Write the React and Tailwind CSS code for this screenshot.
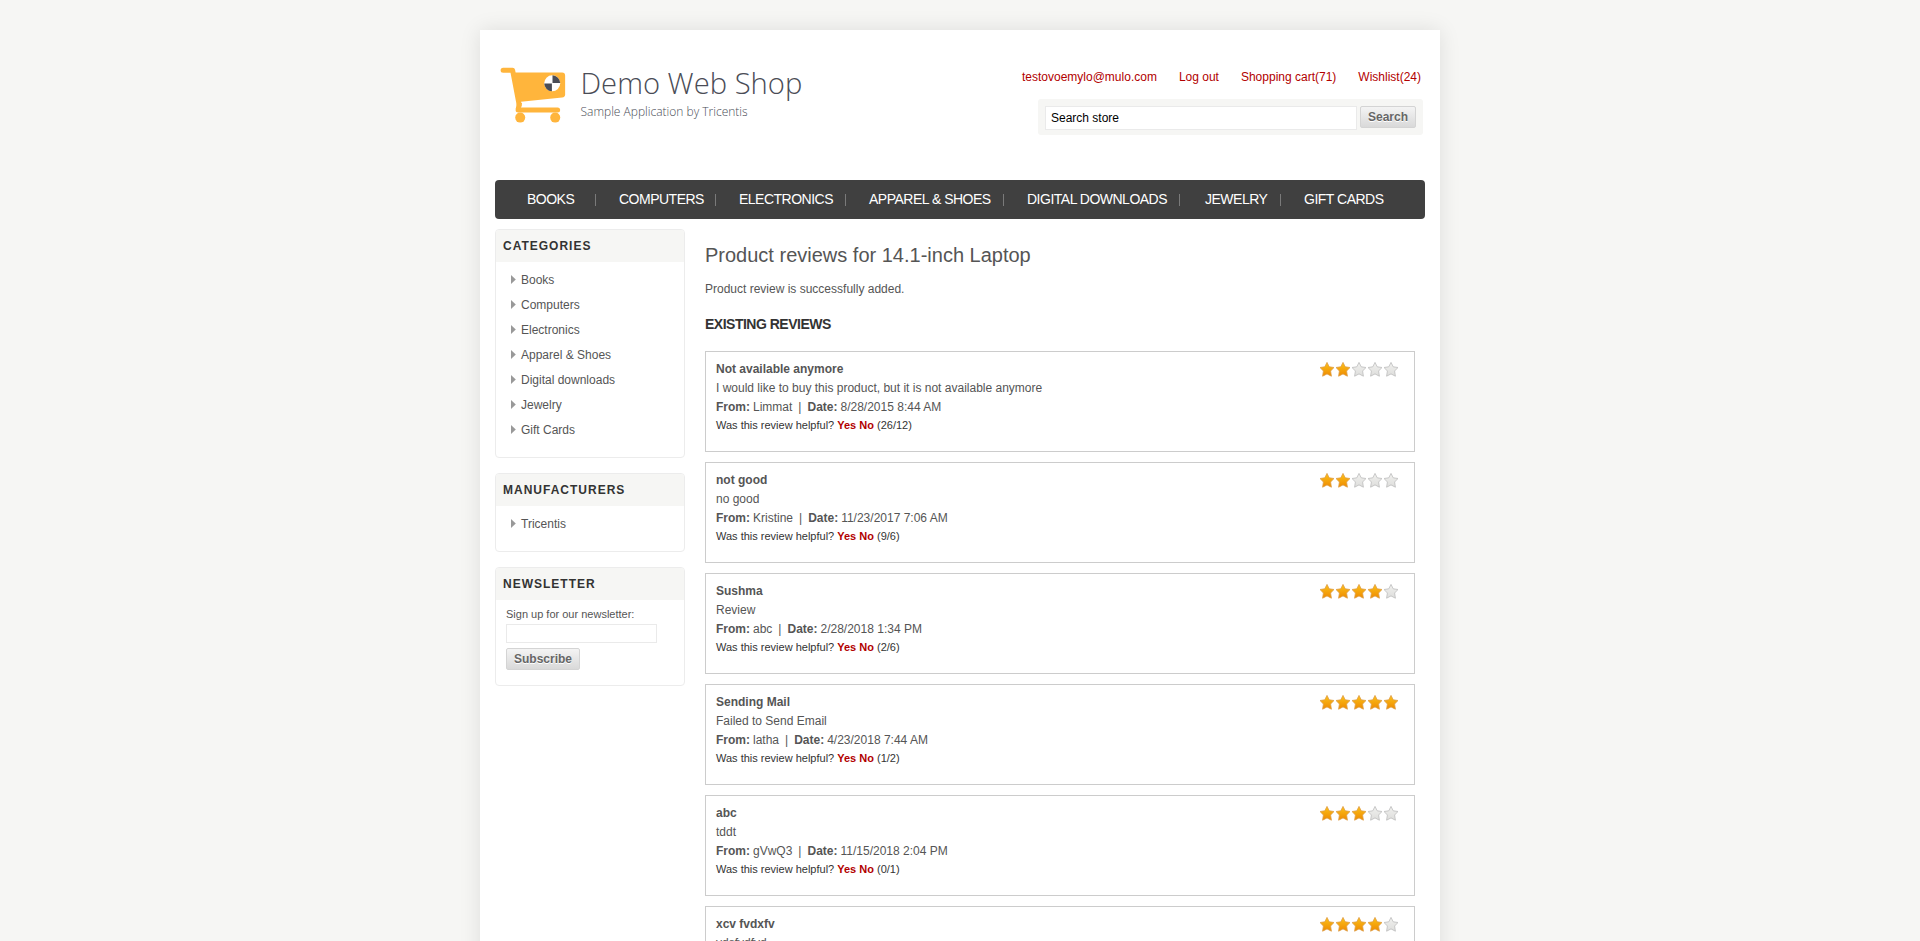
const nav = [
  ['BOOKS', 'w-[69px]', ''],
  ['COMPUTERS', 'w-[120px]', 'pl-[23px]'],
  ['ELECTRONICS', 'w-[130px]', 'pl-[23px]'],
  ['APPAREL & SHOES', 'w-[158px]', 'pl-[23px]'],
  ['DIGITAL DOWNLOADS', 'w-[176px]', 'pl-[23px]'],
  ['JEWELRY', 'w-[101px]', 'pl-[25px]'],
  ['GIFT CARDS', 'w-[120px]', 'pl-[23px]'],
];

const categories = ['Books', 'Computers', 'Electronics', 'Apparel & Shoes', 'Digital downloads', 'Jewelry', 'Gift Cards'];

const reviews = [
  { title: 'Not available anymore', text: 'I would like to buy this product, but it is not available anymore', from: 'Limmat', date: '8/28/2015 8:44 AM', votes: '(26/12)', stars: 2 },
  { title: 'not good', text: 'no good', from: 'Kristine', date: '11/23/2017 7:06 AM', votes: '(9/6)', stars: 2 },
  { title: 'Sushma', text: 'Review', from: 'abc', date: '2/28/2018 1:34 PM', votes: '(2/6)', stars: 4 },
  { title: 'Sending Mail', text: 'Failed to Send Email', from: 'latha', date: '4/23/2018 7:44 AM', votes: '(1/2)', stars: 5 },
  { title: 'abc', text: 'tddt', from: 'gVwQ3', date: '11/15/2018 2:04 PM', votes: '(0/1)', stars: 3 },
  { title: 'xcv fvdxfv', text: 'vdsfvdfvd', stars: 4 },
];

function Logo() {
  return (
    <div className="flex pt-[17px]">
      <svg width="66" height="57" viewBox="-0.6 -0.6 66 57" className="shrink-0">
        <path d="M2.5 2.6H12L18.6 37.5" fill="none" stroke="#ffb53c" strokeWidth="5" strokeLinecap="round" strokeLinejoin="round" />
        <path d="M13 5H61.5Q64.5 5 64.5 8V27Q64.5 29.6 61.5 30L18 34.5Z" fill="#ffb53c" />
        <path d="M17.5 42.3H57" stroke="#ffb53c" strokeWidth="5" strokeLinecap="round" />
        <path d="M19 35L17.5 42" stroke="#ffb53c" strokeWidth="5" />
        <circle cx="19.6" cy="50" r="5" fill="#ffb53c" />
        <circle cx="54.6" cy="50" r="5" fill="#ffb53c" />
        <circle cx="51.6" cy="15.7" r="8" fill="#fff" />
        <path d="M51.9 15.4V7.7A8 8 0 0 1 59.6 15.4ZM51.3 16V23.7A8 8 0 0 1 43.6 16Z" fill="#4a4c56" />
      </svg>
      <div className="pl-[14.5px] font-['Open_Sans',sans-serif] font-light">
        <div className="h-[36px] whitespace-nowrap text-[29.2px] leading-[32px] text-[#4a4c56]">Demo Web Shop</div>
        <div className="whitespace-nowrap text-[12px] leading-[18px] text-[#4a4c56]">Sample Application by Tricentis</div>
      </div>
    </div>
  );
}

const starPath = 'M7 0.4L9.2 4.8L14 5.5L10.6 9L11.4 14.2L7 11.9L2.6 14.2L3.4 9L0 5.5L4.8 4.8Z';

function Stars({ count }) {
  return (
    <div className="flex gap-[2px] pt-[2px]">
      {[0, 1, 2, 3, 4].map((i) => (
        <svg key={i} width="14" height="15" viewBox="0 0 14 15">
          <defs>
            <linearGradient id="gold" x1="0" y1="0" x2="0" y2="1">
              <stop offset="0" stopColor="#fcc21a" />
              <stop offset="1" stopColor="#ee8a00" />
            </linearGradient>
            <linearGradient id="gray" x1="0" y1="0" x2="0" y2="1">
              <stop offset="0" stopColor="#f0f0ee" />
              <stop offset="1" stopColor="#dededc" />
            </linearGradient>
          </defs>
          <path d={starPath} fill={i < count ? 'url(#gold)' : 'url(#gray)'} stroke={i < count ? '#dd9d45' : '#bdbdbd'} strokeWidth="0.8" strokeLinejoin="round" />
        </svg>
      ))}
    </div>
  );
}

function Block({ title, className, children }) {
  return (
    <section className={'mb-[15px] w-[190px] overflow-hidden rounded-[4px] border border-[#ececec] ' + className}>
      <h3 className="h-[32px] bg-[#f6f6f4] pl-[7px] text-[12px] leading-[32px] font-bold tracking-[1px] text-[#333]">{title}</h3>
      {children}
    </section>
  );
}

function LinkList({ items }) {
  return (
    <ul className="pt-[5px] pl-[15px]">
      {items.map((c) => (
        <li key={c} className="flex h-[25px] items-center text-[12px] text-[#555]">
          <svg width="10" height="9" viewBox="0 0 10 9" className="shrink-0"><path d="M0 0L4.8 4.5L0 9Z" fill="#999" /></svg>
          {c}
        </li>
      ))}
    </ul>
  );
}

const button = "flex items-center justify-center rounded-[2px] border border-[#d4d4d4] bg-linear-to-b from-[#f4f4f4] to-[#d9d9d9] text-[12px] font-bold text-[#666] [text-shadow:0_1px_0_#fff]";

export default function App() {
  return (
    <div className="h-[941px] overflow-hidden bg-[#f6f6f4] pt-[30px] font-['Liberation_Sans',Arial,sans-serif]">
      <div className="mx-auto h-[1200px] w-[960px] bg-white px-[15px] shadow-[0_0_20px_rgba(0,0,0,0.1)]">
        <header className="flex h-[150px] justify-between pt-[20px] pl-[5px]">
          <Logo />
          <div className="flex flex-col items-end pr-[2px]">
            <div className="flex gap-[22px] pt-[19px] pr-[2px] text-[12px] leading-[16px] text-[#b20000]">
              <a>testovoemylo@mulo.com</a>
              <a>Log out</a>
              <a>Shopping cart(71)</a>
              <a>Wishlist(24)</a>
            </div>
            <div className="mt-[14px] flex h-[36px] w-[385px] rounded-[3px] bg-[#f6f6f4] pt-[7px] pl-[7px]">
              <div className="h-[24px] w-[312px] border border-[#eaeaea] bg-white pl-[5px] text-[12px] leading-[22px] text-black">Search store</div>
              <div className={'ml-[3px] h-[22px] w-[56px] ' + button}>Search</div>
            </div>
          </div>
        </header>
        <nav className="flex h-[39px] items-center rounded-[4px] bg-[#404040] pl-[32px] text-[14px] tracking-[-0.5px] text-white">
          {nav.map(([label, width, pad], i) => (
            <div key={label} className={'flex h-[12px] shrink-0 items-center justify-between whitespace-nowrap ' + width + ' ' + pad}>
              <span>{label}</span>
              {i < 6 && <i className="h-[12px] w-px bg-[#7a7a7a]" />}
            </div>
          ))}
        </nav>
        <div className="flex pt-[10px]">
          <aside className="w-[190px] shrink-0">
            <Block title="CATEGORIES" className="h-[229px]"><LinkList items={categories} /></Block>
            <Block title="MANUFACTURERS" className="h-[79px]"><LinkList items={['Tricentis']} /></Block>
            <Block title="NEWSLETTER" className="h-[119px]">
              <div className="pt-[6px] pl-[10px]">
                <div className="text-[11px] leading-[16px] text-[#555]">Sign up for our newsletter:</div>
                <div className="mt-[2px] h-[19px] w-[151px] border border-[#eaeaea] bg-white" />
                <div className={'mt-[5px] h-[22px] w-[74px] ' + button}>Subscribe</div>
              </div>
            </Block>
          </aside>
          <main className="w-[730px] pt-[11px] pl-[20px] text-[#555]">
            <h1 className="text-[20px] leading-[30px]">Product reviews for 14.1-inch Laptop</h1>
            <p className="pt-[11px] text-[12px] leading-[16px]">Product review is successfully added.</p>
            <h2 className="pt-[18px] text-[14px] leading-[18px] font-bold tracking-[-0.5px] text-[#333]">EXISTING REVIEWS</h2>
            <div className="flex flex-col gap-[10px] pt-[18px]">
              {reviews.map((r) => (
                <article key={r.title} className="flex h-[101px] w-[710px] justify-between border border-[#ccc] pt-[8px] pr-[16px] pl-[10px] text-[12px] leading-[19px]">
                  <div>
                    <div className="font-bold">{r.title}</div>
                    <div>{r.text}</div>
                    {r.from && (
                      <>
                        <div className="flex">
                          <b>From:</b><span className="pl-[3px]">{r.from}</span><span className="px-[6px]">|</span><b>Date:</b><span className="pl-[3px]">{r.date}</span>
                        </div>
                        <div className="text-[11px] leading-[16px] text-[#333]">Was this review helpful? <b className="text-[#b20000]">Yes No</b> {r.votes}</div>
                      </>
                    )}
                  </div>
                  <Stars count={r.stars} />
                </article>
              ))}
            </div>
          </main>
        </div>
      </div>
    </div>
  );
}
